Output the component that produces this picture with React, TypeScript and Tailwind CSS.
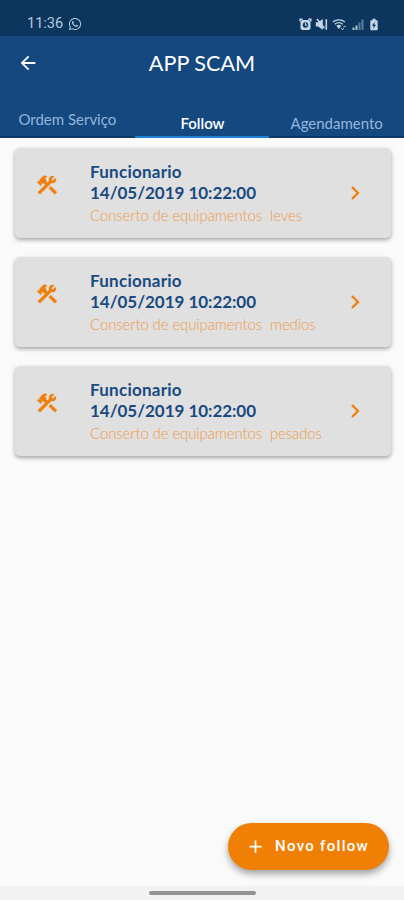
import { useState } from 'react';
import { MdAdd, MdArrowBack } from 'react-icons/md';
import { FaWhatsapp } from 'react-icons/fa';

const tabs = ['Ordem Serviço', 'Follow', 'Agendamento'];

const follows = [
  { id: 1, name: 'Funcionario', date: '14/05/2019 10:22:00', description: 'Conserto de equipamentos  leves' },
  { id: 2, name: 'Funcionario', date: '14/05/2019 10:22:00', description: 'Conserto de equipamentos  medios' },
  { id: 3, name: 'Funcionario', date: '14/05/2019 10:22:00', description: 'Conserto de equipamentos  pesados' },
];

function AlarmIcon() {
  return (
    <svg width="13" height="13" viewBox="0 0 13 13" fill="none">
      <path d="M1.2 3.5V1.2h2.4M9.4 1.2h2.4v2.3" stroke="currentColor" strokeWidth="1.5" />
      <path d="M3 2h7l1.5 2v6.5L10 12H3l-1.5-1.5V4z" fill="currentColor" />
      <circle cx="6.5" cy="7" r="2.7" fill="#0d365e" />
      <path d="M6.5 5v2.2h1.8" stroke="currentColor" strokeWidth="1.1" />
    </svg>
  );
}

function MuteIcon() {
  return (
    <svg width="13" height="13" viewBox="0 0 13 13" fill="none">
      <path d="M.8 4.2h2.4L7.8 1v11L3.2 8.6H.8z" fill="currentColor" />
      <path d="M2 1l7.5 9.2M11.3 1.2v10.6" stroke="currentColor" strokeWidth="1.6" />
    </svg>
  );
}

function WifiIcon() {
  return (
    <svg width="15" height="13" viewBox="0 0 15 13" fill="none">
      <path d="M.8 4.1c3.5-3 8.6-3 12 0M2.8 6.3c2.4-2 5.6-2 8 0" stroke="currentColor" strokeWidth="1.3" />
      <path d="M4.3 7.8c1.6-1.3 3.4-1.3 5 0L6.8 11z" fill="currentColor" />
      <path d="M9.3 10.2l1.2 1.5 1.2-1.5M11.5 9.2l1.1-1.3 1.2 1.3" stroke="currentColor" strokeWidth="1" />
    </svg>
  );
}

function SignalIcon() {
  return (
    <svg width="12" height="13" viewBox="0 0 12 13" fill="none">
      <path d="M1.5 9.5V12M4.5 7.5V12" stroke="#a9c0d7" strokeWidth="2" />
      <path d="M7.5 4.5V12M10.5 1.5V12" stroke="#5f7f9f" strokeWidth="2" />
    </svg>
  );
}

function BatteryIcon() {
  return (
    <svg width="10" height="13" viewBox="0 0 10 13" fill="none">
      <path d="M3.5.8h3v1.5h1.2q1 0 1 1v8q0 1-1 1H2.3q-1 0-1-1v-8q0-1 1-1h1.2z" fill="currentColor" />
      <path d="M5.6 3.8L3 7.8h1.7l-.5 3L7 6.8H5.3z" fill="#0d365e" />
    </svg>
  );
}

function ToolsIcon() {
  return (
    <svg width="24" height="24" viewBox="0 0 24 24" fill="currentColor" stroke="currentColor" strokeWidth="0.4">
      <path d="M13.78 15.3L19.78 21.3L21.89 19.14L15.89 13.14L13.78 15.3M17.5 10.1C17.11 10.1 16.69 10.05 16.36 9.91L4.97 21.25L2.86 19.14L10.27 11.74L8.5 9.96L7.78 10.66L6.33 9.25V12.11L5.63 12.81L2.11 9.25L2.81 8.55H5.62L4.22 7.14L7.78 3.58C8.95 2.41 10.83 2.41 12 3.58L9.89 5.74L11.3 7.14L10.59 7.85L12.38 9.63L14.2 7.75C14.06 7.42 14 7 14 6.63C14 4.66 15.56 3.11 17.5 3.11C18.09 3.11 18.61 3.25 19.08 3.53L16.41 6.2L17.91 7.7L20.58 5.03C20.86 5.5 21 6 21 6.63C21 8.55 19.45 10.1 17.5 10.1Z" />
    </svg>
  );
}

function StatusBar() {
  return (
    <div className="flex h-9 items-end justify-between bg-[#0d365e] pb-[5px] pl-[27px] pr-[25px] text-[#b4c9df]">
      <div className="flex items-center gap-[5px]">
        <span className="font-['Roboto',sans-serif] text-[14.5px] leading-[15px]">11:36</span>
        <FaWhatsapp size={14} />
      </div>
      <div className="flex items-center text-[#c3d5e7]">
        <div className="mr-[4px] flex gap-[3px]">
          <AlarmIcon />
          <MuteIcon />
        </div>
        <div className="flex gap-[5px]">
          <WifiIcon />
          <SignalIcon />
          <BatteryIcon />
        </div>
      </div>
    </div>
  );
}

type FollowCardProps = {
  name: string;
  date: string;
  description: string;
};

function FollowCard({ name, date, description }: FollowCardProps) {
  return (
    <div className="flex h-[90px] rounded-[5px] bg-[#e0e0e0] pl-[20px] shadow-[0_2px_4px_rgba(0,0,0,0.35)]">
      <div className="w-[55px] pt-[25px] text-[#f07f09]">
        <ToolsIcon />
      </div>
      <div className="flex-1 pt-[13px]">
        <p className="text-[17px] leading-[21px] font-bold tracking-[0.25px] text-[#194a80]">{name}</p>
        <p className="text-[17px] leading-[21px] font-bold tracking-[-0.04px] text-[#194a80]">{date}</p>
        <p className="mt-[2px] text-[15px] leading-[21px] font-light tracking-[-0.12px] whitespace-pre text-[#f09a48]">
          {description}
        </p>
      </div>
      <div className="flex w-[41px] items-center">
        <svg width="10" height="14" viewBox="0 0 10 14" fill="none">
          <path d="M2 1l6 6-6 6" stroke="#f07f09" strokeWidth="2.3" />
        </svg>
      </div>
    </div>
  );
}

export default function App() {
  const [selected, setSelected] = useState<string>('Follow');

  return (
    <div className="flex h-[900px] w-[404px] flex-col overflow-hidden bg-[#fafafa] font-['Lato',sans-serif]">
      <StatusBar />
      <header className="flex h-[102px] flex-col justify-between bg-[#15487f]">
        <div className="grid h-[54px] grid-cols-[60px_1fr_60px] items-center">
          <button className="pl-[17px] text-white">
            <MdArrowBack size={22} />
          </button>
          <h1 className="text-center text-[21.6px] text-white">APP SCAM</h1>
        </div>
        <nav className="grid h-[38px] grid-cols-3">
          {tabs.map((tab) => (
            <button
              key={tab}
              onClick={() => setSelected(tab)}
              className={
                selected === tab
                  ? 'border-b-2 border-[#1d80d4] pt-[10px] pl-[1px] text-[15px] font-semibold text-white'
                  : 'border-b-2 border-[#0d3868] text-[15px] text-[#94b6dc] first:pt-[2px] last:pt-[10px]'
              }
            >
              {tab}
            </button>
          ))}
        </nav>
      </header>
      <main className="flex flex-1 flex-col gap-[19px] pt-[10px] pr-[13px] pl-[15px]">
        {follows.map((follow) => (
          <FollowCard key={follow.id} name={follow.name} date={follow.date} description={follow.description} />
        ))}
      </main>
      <div className="flex justify-end pr-[15px] pb-[16px]">
        <button className="flex h-[47px] w-[161px] items-center gap-[9px] rounded-full bg-[#f07f05] pl-[17px] font-['Roboto',sans-serif] text-[15px] font-medium tracking-[1.3px] text-white shadow-[0_4px_7px_rgba(0,0,0,0.35)]">
          <MdAdd size={21} />
          Novo follow
        </button>
      </div>
      <div className="flex h-[14px] justify-center bg-[#f2f2f2] pt-[5px]">
        <div className="h-[4px] w-[107px] rounded-full bg-[#929292]" />
      </div>
    </div>
  );
}
